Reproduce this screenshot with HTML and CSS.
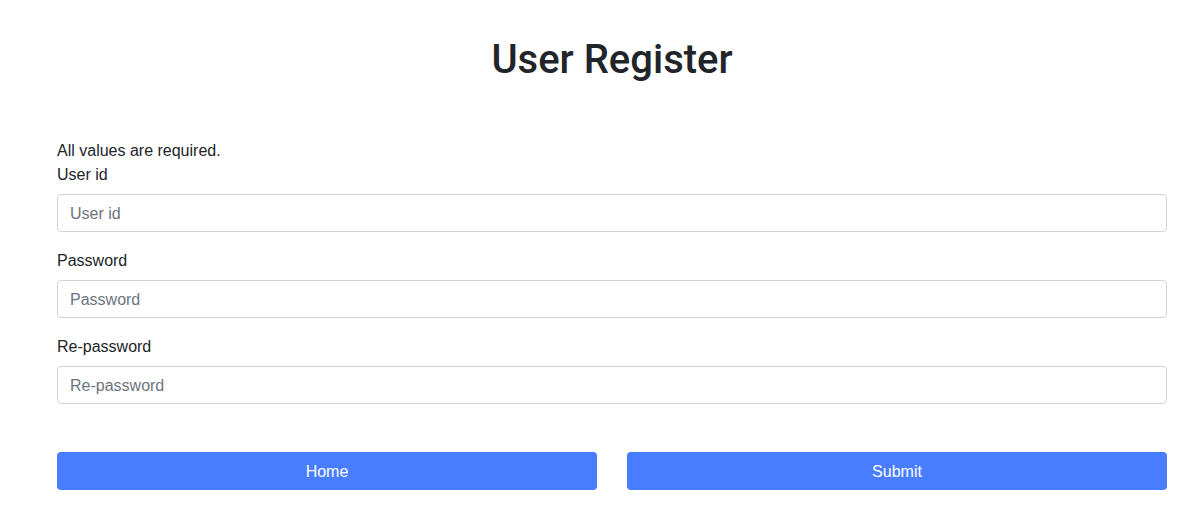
FILE: index.html
```html
<!DOCTYPE html>
<html lang="en">
<head>
<meta charset="utf-8">
<title>User Register</title>
<link rel="stylesheet" href="styles.css">
</head>
<body>
<main class="page">
  <h1 class="title">User Register</h1>
  <form class="form">
    <p class="note">All values are required.</p>
    <div class="field">
      <label class="label" for="uid">User id</label>
      <input class="input" id="uid" type="text" placeholder="User id">
    </div>
    <div class="field">
      <label class="label" for="pw">Password</label>
      <input class="input" id="pw" type="password" placeholder="Password">
    </div>
    <div class="field">
      <label class="label" for="rpw">Re-password</label>
      <input class="input" id="rpw" type="password" placeholder="Re-password">
    </div>
    <div class="actions">
      <button type="button" class="btn">Home</button>
      <button type="submit" class="btn">Submit</button>
    </div>
  </form>
</main>
</body>
</html>
```
FILE: styles.css
```css
* { box-sizing: border-box; }
html, body { margin: 0; background: #fff; }
body {
  font-family: "Liberation Sans", Arial, sans-serif;
  font-size: 16px;
  line-height: 1.5;
  color: #212529;
}
.page {
  width: 1110px;
  margin-left: 57px;
  padding-top: 36px;
}
.title {
  margin: 0;
  text-align: center;
  font-family: Roboto, "Liberation Sans", Arial, sans-serif;
  font-size: 40px;
  font-weight: 500;
  line-height: 48px;
}
.form {
  margin-top: 54px;
}
.note {
  margin: 0;
  padding-top: 1px;
  margin-bottom: -1px;
}
.field {
  margin-bottom: 16px;
}
.label {
  display: block;
  padding-top: 1px;
  margin-bottom: 7px;
}
.input {
  display: block;
  width: 100%;
  height: 38px;
  padding: 7px 12px 5px;
  font: inherit;
  color: #212529;
  border: 1px solid #ced4da;
  border-radius: 4px;
  background: #fff;
  outline: none;
}
.input::placeholder { color: #6c757d; }
.actions {
  display: grid;
  grid-template-columns: 1fr 1fr;
  column-gap: 30px;
  margin-top: 48px;
}
.btn {
  height: 38px;
  padding: 2px 0 0;
  border: 0;
  border-radius: 4px;
  background: #487dff;
  color: #fff;
  font: inherit;
  cursor: pointer;
}
```
